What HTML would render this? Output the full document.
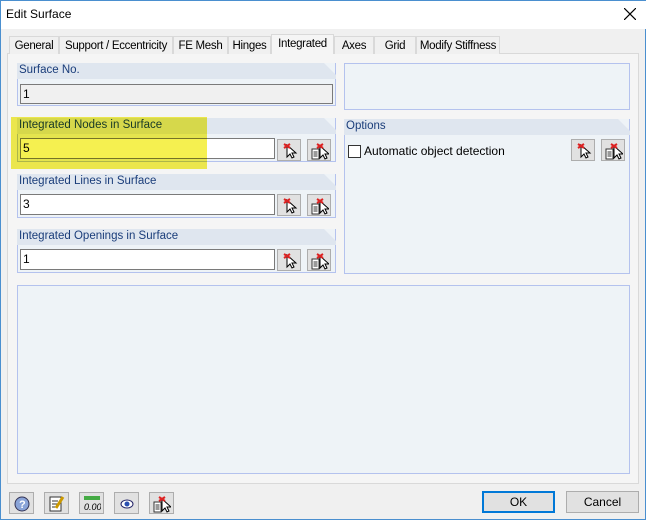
<!DOCTYPE html>
<html><head><style>
*{margin:0;padding:0;box-sizing:border-box}
body{width:646px;height:520px;background:#f0f0f0;font-family:"Liberation Sans",sans-serif;font-size:12px;color:#000;position:relative;overflow:hidden;border:1px solid #4a8fcf;white-space:nowrap}
.a{position:absolute}
.tab{position:absolute;top:35px;height:18px;border:1px solid #d9d9d9;border-bottom:none;background:#f0f0f0;padding:3px 0 0;text-align:center;font-size:11.5px;letter-spacing:-0.3px;overflow:hidden}
.grp{position:absolute;background:#eef3f7;border:1px solid #b4c2ee;border-top:none}
.hdr{position:absolute;left:-1px;top:0;right:-1px;height:16px;background:#dfe6ef;color:#1a3d7a;padding:1px 2px;font-size:11.5px;clip-path:polygon(0 0,calc(100% - 12px) 0,100% 12px,100% 100%,0 100%)}
.inp{position:absolute;background:#fff;border:1px solid #7a7a7a;padding:2px 2px;font-size:12px}
.btn{position:absolute;width:24px;height:22px;background:#e1e1e1;border:1px solid #adadad}
.btn svg{position:absolute;left:3px;top:2px}
.dlg{position:absolute;top:490px;width:73px;height:22px;background:#e1e1e1;border:1px solid #adadad;text-align:center;padding-top:3px}
</style></head><body>
<div class="a" style="left:0;top:0;width:646px;height:28px;background:#fff"></div>
<div class="a" style="left:5px;top:6px;font-size:12px">Edit Surface</div>
<svg class="a" style="left:623px;top:7px" width="12" height="12"><path d="M0 0L12 12M12 0L0 12" stroke="#000" stroke-width="1.2"/></svg>
<div class="a" style="left:6px;top:52px;width:632px;height:431px;background:#f5f5f5;border:1px solid #d9d9d9"></div>
<div class="tab" style="left:8px;width:50px">General</div>
<div class="tab" style="left:58px;width:114px">Support / Eccentricity</div>
<div class="tab" style="left:172px;width:55px">FE Mesh</div>
<div class="tab" style="left:227px;width:43px">Hinges</div>
<div class="tab" style="left:270px;top:33px;height:20px;width:63px;background:#f5f5f5;padding-top:3px">Integrated</div>
<div class="tab" style="left:333px;width:40px">Axes</div>
<div class="tab" style="left:373px;width:42px">Grid</div>
<div class="tab" style="left:415px;width:84px">Modify Stiffness</div>

<div class="grp" style="left:16px;top:62px;width:319px;height:43px"><div class="hdr">Surface No.</div><div class="inp" style="left:2px;top:21px;width:313px;height:20px;background:#f0f0f0">1</div></div>

<div class="grp" style="left:16px;top:117px;width:319px;height:44px"><div class="hdr">Integrated Nodes in Surface</div><div class="inp" style="left:2px;top:20px;width:255px;height:21px">5</div></div>
<div class="grp" style="left:16px;top:173px;width:319px;height:44px"><div class="hdr">Integrated Lines in Surface</div><div class="inp" style="left:2px;top:20px;width:255px;height:21px">3</div></div>
<div class="grp" style="left:16px;top:228px;width:319px;height:44px"><div class="hdr">Integrated Openings in Surface</div><div class="inp" style="left:2px;top:20px;width:255px;height:21px">1</div></div>

<div class="a" style="left:10px;top:116px;width:196px;height:52px;background:#f5f050;mix-blend-mode:multiply"></div>

<div class="grp" style="left:343px;top:62px;width:286px;height:47px;border-top:1px solid #b4c2ee"></div>
<div class="grp" style="left:343px;top:118px;width:286px;height:155px"><div class="hdr">Options</div>
<div class="a" style="left:3px;top:26px;width:13px;height:13px;border:1px solid #333;background:#fff"></div>
<div class="a" style="left:19px;top:25px">Automatic object detection</div></div>

<div class="grp" style="left:16px;top:284px;width:613px;height:189px;border-top:1px solid #b4c2ee"></div>

<svg width="0" height="0" style="position:absolute"><defs>
<g id="p"><path d="M6 3 L6 15 L9 12 L11 16 L13 15 L11 11 L15 11 Z" fill="#fff" stroke="#000"/><path d="M3 2 L9 6 M9 2 L3 6" stroke="#d22" stroke-width="2"/></g>
<g id="q"><rect x="1" y="7" width="7" height="10" fill="#fff" stroke="#333"/><path d="M2.5 10h4M2.5 12h4M2.5 14h4" stroke="#333"/><path d="M9 4 L9 16 L12 13 L14 17 L16 16 L14 12 L18 12 Z" fill="#fff" stroke="#000"/><path d="M6 2 L12 6 M12 2 L6 6" stroke="#d22" stroke-width="2"/></g>
</defs></svg>
<div class="btn" style="left:276px;top:138px"><svg width="18" height="18"><use href="#p"/></svg></div>
<div class="btn" style="left:306px;top:138px"><svg width="18" height="18"><use href="#q"/></svg></div>
<div class="btn" style="left:276px;top:193px"><svg width="18" height="18"><use href="#p"/></svg></div>
<div class="btn" style="left:306px;top:193px"><svg width="18" height="18"><use href="#q"/></svg></div>
<div class="btn" style="left:276px;top:248px"><svg width="18" height="18"><use href="#p"/></svg></div>
<div class="btn" style="left:306px;top:248px"><svg width="18" height="18"><use href="#q"/></svg></div>
<div class="btn" style="left:570px;top:138px"><svg width="18" height="18"><use href="#p"/></svg></div>
<div class="btn" style="left:600px;top:138px"><svg width="18" height="18"><use href="#q"/></svg></div>

<div class="btn" style="left:8px;top:491px;width:25px"><svg width="18" height="18"><circle cx="9" cy="9" r="7" fill="#8aa4d8" stroke="#335"/><text x="6" y="13" font-size="11" font-weight="bold" fill="#fff" font-family="Liberation Sans">?</text></svg></div>
<div class="btn" style="left:43px;top:491px;width:25px"><svg width="18" height="18"><rect x="2" y="2" width="11" height="14" fill="#fff" stroke="#333"/><path d="M4 6h6M4 9h6M4 12h5" stroke="#333"/><path d="M15 2 L8 13" stroke="#c90" stroke-width="3"/></svg></div>
<div class="btn" style="left:78px;top:491px;width:25px"><svg width="18" height="18"><rect x="1" y="1" width="16" height="4" fill="#4a4"/><text x="1" y="15" font-size="9" font-style="italic" font-family="Liberation Sans">0.00</text></svg></div>
<div class="btn" style="left:113px;top:491px;width:25px"><svg width="18" height="18"><ellipse cx="9" cy="9" rx="6" ry="4" fill="#fff" stroke="#226"/><circle cx="9" cy="9" r="2.5" fill="#2a4fb0"/></svg></div>
<div class="btn" style="left:148px;top:491px;width:25px"><svg width="18" height="18"><use href="#q"/></svg></div>
<div class="dlg" style="left:481px;border:2px solid #0078d7;padding-top:2px">OK</div>
<div class="dlg" style="left:565px">Cancel</div>
</body></html>
